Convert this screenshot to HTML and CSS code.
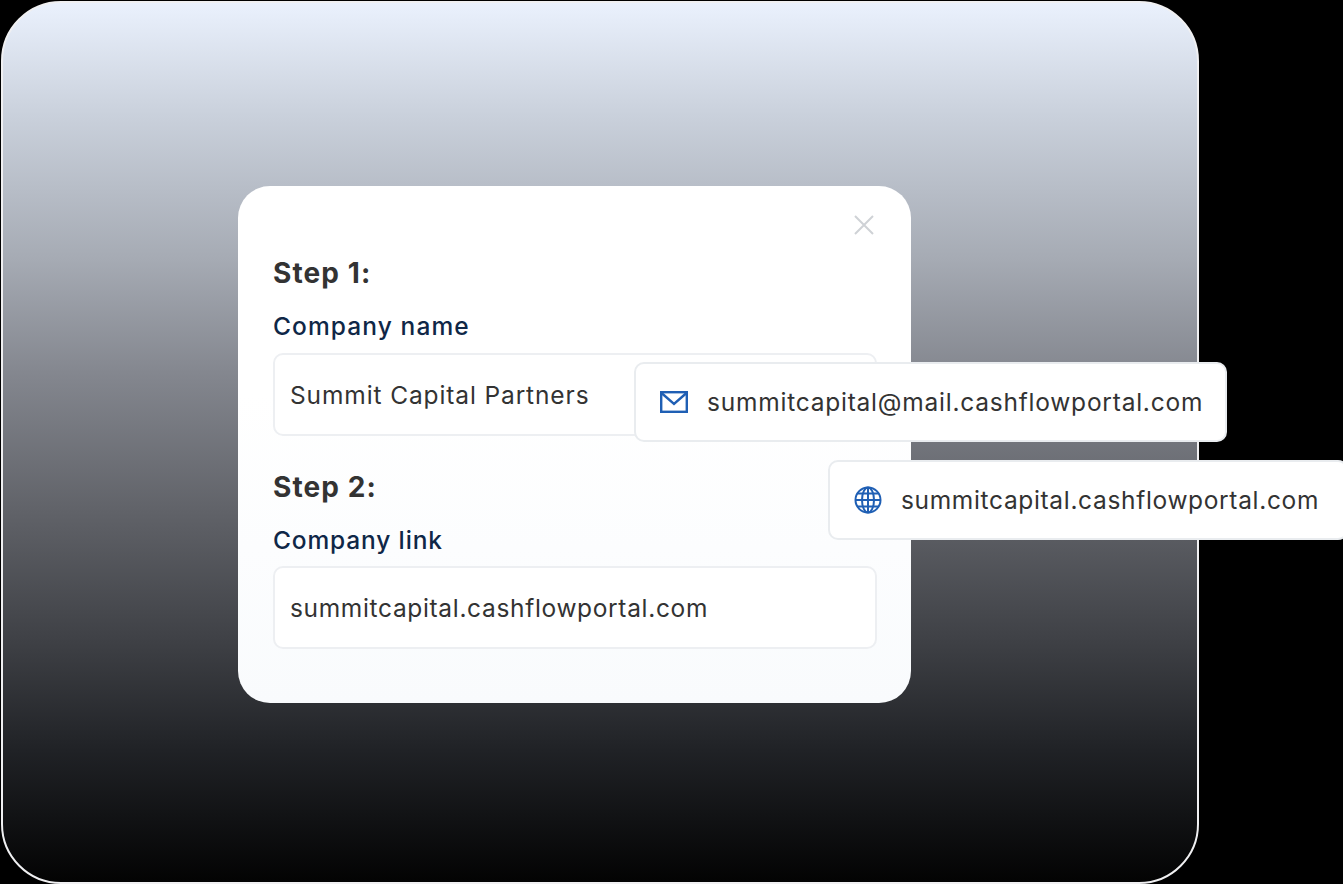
FILE: index.html
```html
<!DOCTYPE html>
<html lang="en">
<head>
<meta charset="utf-8">
<title>Company setup</title>
<link rel="stylesheet" href="styles.css">
</head>
<body>
<main class="frame">
  <section class="modal">
    <div class="modal-top">
      <svg class="close" width="22" height="22" viewBox="0 0 22 22" fill="none" stroke="#cfd2d6" stroke-width="2"><path d="M2 2l18 18M20 2L2 20"/></svg>
    </div>
    <h2 class="step">Step 1:</h2>
    <div class="label">Company name</div>
    <div class="field field-name">Summit Capital Partners</div>
    <h2 class="step step-two">Step 2:</h2>
    <div class="label label-link">Company link</div>
    <div class="field field-link">summitcapital.cashflowportal.com</div>
  </section>
</main>
<div class="chip chip-mail">
  <svg class="chip-icon" width="28" height="22" viewBox="0 0 28 22" fill="none" stroke="#1f5fb4" stroke-width="2.4"><rect x="1.200" y="1.200" width="25.600" height="19.600"/><path d="M1.500 2L14 13 26.500 2"/></svg>
  <span>summitcapital@mail.cashflowportal.com</span>
</div>
<div class="chip chip-web">
  <svg class="chip-icon" width="28" height="28" viewBox="0 0 28 28" fill="none" stroke="#1f5fb4" stroke-width="2"><circle cx="14" cy="14" r="12.500"/><ellipse cx="14" cy="14" rx="6" ry="12.500"/><path d="M14 1.500v25M1.500 14h25M3.500 7.500h21M3.500 20.500h21"/></svg>
  <span>summitcapital.cashflowportal.com</span>
</div>
</body>
</html>
```
FILE: styles.css
```css
* { box-sizing: border-box; }
html, body { margin: 0; height: 100%; }
body {
  background: #000;
  overflow: hidden;
  position: relative;
  font-family: "Inter", "Open Sans", sans-serif;
}
.frame {
  width: 1198px;
  height: 883px;
  margin: 1px 0 0 1px;
  padding: 183px 0 0 235px;
  border-radius: 60px;
  border: 2px solid #f0f0f2;
  background: linear-gradient(180deg, #eaf1fd 0%, #c9d0db 13%, #a6abb4 29%, #84878f 42%, #606268 58%, #404247 72%, #202226 85%, #030303 100%);
}
.modal {
  width: 673px;
  height: 517px;
  padding: 26px 34px 0 35px;
  border-radius: 32px;
  background: linear-gradient(180deg, #fff 0%, #fff 40%, #f9fbfd 100%);
}
.modal-top { display: flex; justify-content: flex-end; height: 24px; padding-right: 2px; }
.close { width: 22px; height: 22px; margin-top: 2px; }
.step {
  margin: 18px 0 0;
  font-size: 28px;
  line-height: 38px;
  font-weight: 700;
  color: #333;
  letter-spacing: 1.100px;
}
.step-two { margin-top: 32px; }
.label {
  margin-top: 19px;
  font-size: 24.500px;
  line-height: 30px;
  font-weight: 500;
  letter-spacing: 1.100px;
  color: #0f2747;
}
.label-link { letter-spacing: 0.850px; }
.field {
  margin-top: 12px;
  width: 604px;
  height: 83px;
  padding: 0 15px;
  display: flex;
  align-items: center;
  border: 2px solid #edeff2;
  border-radius: 10px;
  background: #fff;
  font-size: 24.500px;
  color: #333;
}
.field-name { letter-spacing: 0.880px; }
.field-link { margin-top: 11px; letter-spacing: 0.660px; }
.chip {
  position: absolute;
  display: flex;
  align-items: center;
  height: 80px;
  background: #fff;
  border: 2px solid #e9ecef;
  border-radius: 10px;
  font-size: 24.500px;
  color: #333;
}
.chip-mail { left: 634px; top: 362px; width: 593px; padding-left: 24px; gap: 19px; letter-spacing: 0.770px; }
.chip-web { left: 828px; top: 460px; width: 520px; padding-left: 24px; gap: 19px; letter-spacing: 0.660px; }
```
